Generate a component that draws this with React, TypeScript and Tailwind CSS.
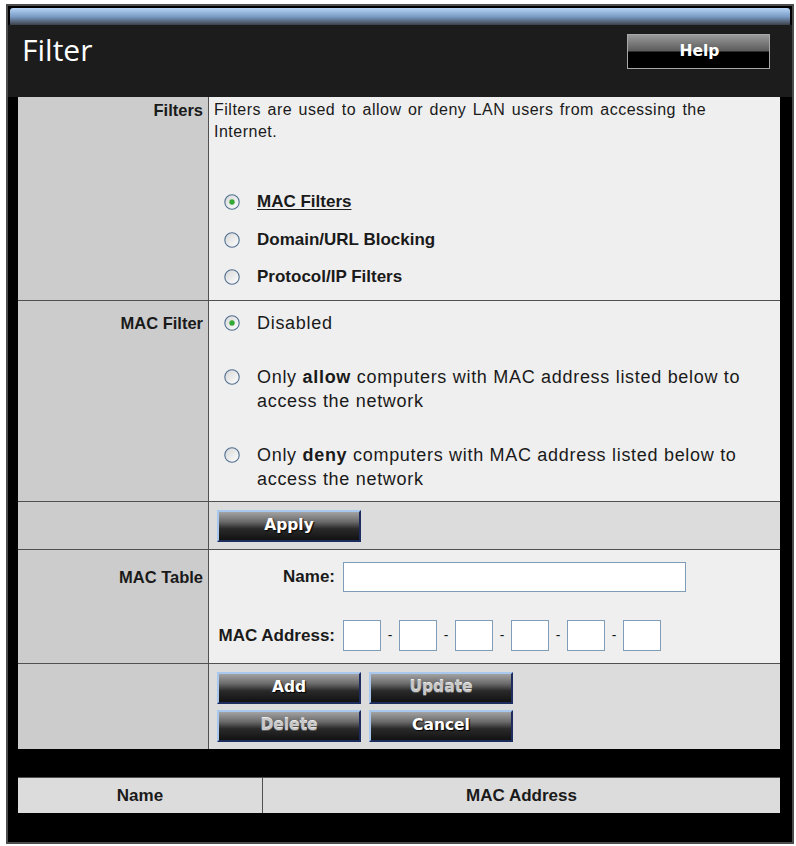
import React from "react"

const btnBase =
  "h-[32px] w-[144px] border-2 border-t-[#a9c8ee] border-l-[#a9c8ee] border-r-[#1d2c5e] border-b-[#1d2c5e] bg-[linear-gradient(to_bottom,#a3a3a3,#6a6a6a_35%,#2a2a2a_60%,#121212)] text-[15.5px] font-bold leading-none [font-family:'DejaVu_Sans',Verdana,sans-serif]"

function ActionButton({ label, disabled = false }: { label: string; disabled?: boolean }) {
  return (
    <button
      className={
        btnBase +
        (disabled
          ? " text-[#c9c9c9] [text-shadow:0_1px_0_#5a5a5a,0_-1px_0_#eeeeee]"
          : " text-white [text-shadow:1px_1px_1px_#000]")
      }
    >
      {label}
    </button>
  )
}

function Radio({ checked = false }: { checked?: boolean }) {
  return (
    <svg width="16" height="16" viewBox="0 0 16 16" className="shrink-0">
      <defs>
        <linearGradient id={checked ? "rg-on" : "rg-off"} x1="0" y1="0" x2="1" y2="1">
          <stop offset="0" stopColor="#d6d6d6" />
          <stop offset="1" stopColor="#ffffff" />
        </linearGradient>
      </defs>
      <circle cx="8" cy="8" r="7.2" fill={`url(#${checked ? "rg-on" : "rg-off"})`} stroke="#4f6f90" strokeWidth="1.1" />
      {checked && <circle cx="8" cy="8" r="2.7" fill="#35a835" />}
    </svg>
  )
}

function MacBox() {
  return <input className="h-[31px] w-[38px] border border-[#7f9db9] bg-white outline-none" />
}

export default function App() {
  return (
    <div className="min-h-screen bg-white pl-[6px] pt-[4px] text-[#1a1a1a] [font-family:'Liberation_Sans',Arial,sans-serif]">
      <div className="flex h-[840px] w-[788px] flex-col border-2 border-[#4d4d4d] bg-black">
        {/* top glossy bar */}
        <div className="mx-[2px] mt-[2px] h-[17px] rounded-t-[3px] bg-[linear-gradient(to_bottom,#b7d4f5,#7b9cc6_50%,#3d4148)]" />

        {/* title bar */}
        <div className="flex h-[72px] items-start justify-between bg-[#1c1c1c] pl-[14px] pr-[22px]">
          <h1 className="mt-[5px] text-[30px] leading-[40px] text-white [font-family:'Open_Sans',sans-serif]">Filter</h1>
          <button className="mt-[9px] h-[35px] w-[143px] border border-[#a8a8a8] bg-[linear-gradient(to_bottom,#9a9a9a,#5c5c5c_48%,#000_52%,#000)] pl-[2px] text-[15.5px] font-bold text-white [font-family:'DejaVu_Sans',Verdana,sans-serif]">
            Help
          </button>
        </div>

        <div className="pl-[10px] pr-[12px]">
          {/* Filters */}
          <div className="flex h-[204px] border-b border-[#505050]">
            <div className="w-[191px] border-r border-[#505050] bg-[#cccccc] pr-[5px] pt-[2px] text-right text-[16.5px] font-bold leading-[22px]">
              Filters
            </div>
            <div className="flex-1 bg-[#efefef] pl-[5px] pt-[2px]">
              <p className="w-[530px] text-[16px] leading-[22px] tracking-[0.5px] [word-spacing:1.5px]">
                Filters are used to allow or deny LAN users from accessing the Internet.
              </p>
              <div className="mt-[47px] flex flex-col gap-[13.5px] pl-[10px] text-[17px] font-bold">
                <label className="flex h-[24px] items-center gap-[17px]">
                  <Radio checked />
                  <span className="underline underline-offset-2">MAC Filters</span>
                </label>
                <label className="flex h-[24px] items-center gap-[17px]">
                  <Radio />
                  <span>Domain/URL Blocking</span>
                </label>
                <label className="flex h-[24px] items-center gap-[17px]">
                  <Radio />
                  <span>Protocol/IP Filters</span>
                </label>
              </div>
            </div>
          </div>

          {/* MAC Filter */}
          <div className="flex h-[201px] border-b border-[#505050]">
            <div className="w-[191px] border-r border-[#505050] bg-[#cccccc] pr-[5px] pt-[10px] text-right text-[16.5px] font-bold leading-[24px]">
              MAC Filter
            </div>
            <div className="flex flex-1 flex-col gap-[30px] bg-[#efefef] pl-[15px] pr-[20px] pt-[10px] text-[18px] leading-[24px] tracking-[0.7px]">
              <label className="flex items-start gap-[17px]">
                <span className="mt-[4px]">
                  <Radio checked />
                </span>
                <span>Disabled</span>
              </label>
              <label className="flex items-start gap-[17px]">
                <span className="mt-[4px]">
                  <Radio />
                </span>
                <span>
                  Only <b>allow</b> computers with MAC address listed below to
                  <br />
                  access the network
                </span>
              </label>
              <label className="flex items-start gap-[17px]">
                <span className="mt-[4px]">
                  <Radio />
                </span>
                <span>
                  Only <b>deny</b> computers with MAC address listed below to
                  <br />
                  access the network
                </span>
              </label>
            </div>
          </div>

          {/* Apply */}
          <div className="flex h-[48px] border-b border-[#505050]">
            <div className="w-[191px] border-r border-[#505050] bg-[#cccccc]" />
            <div className="flex-1 bg-[#dcdcdc] pl-[8px] pt-[8px]">
              <ActionButton label="Apply" />
            </div>
          </div>

          {/* MAC Table */}
          <div className="flex h-[114px] border-b border-[#505050]">
            <div className="w-[191px] border-r border-[#505050] bg-[#cccccc] pr-[5px] pt-[15px] text-right text-[16.5px] font-bold leading-[24px]">
              MAC Table
            </div>
            <div className="flex flex-1 flex-col gap-[28px] bg-[#efefef] pt-[12px] text-[17px] font-bold">
              <div className="flex items-center gap-[8px]">
                <span className="w-[126px] text-right">Name:</span>
                <input className="h-[30px] w-[343px] border border-[#7f9db9] bg-white outline-none" />
              </div>
              <div className="flex items-center gap-[8px]">
                <span className="w-[126px] text-right">MAC Address:</span>
                <div className="flex items-center">
                  {[0, 1, 2, 3, 4, 5].map((i) => (
                    <React.Fragment key={i}>
                      {i > 0 && <span className="w-[18px] text-center text-[14px] font-normal">-</span>}
                      <MacBox />
                    </React.Fragment>
                  ))}
                </div>
              </div>
            </div>
          </div>

          {/* Add / Update / Delete / Cancel */}
          <div className="flex h-[85px]">
            <div className="w-[191px] border-r border-[#505050] bg-[#cccccc]" />
            <div className="grid flex-1 grid-cols-[144px_144px] content-start gap-x-[8px] gap-y-[6px] bg-[#dcdcdc] pl-[8px] pt-[8px]">
              <ActionButton label="Add" />
              <ActionButton label="Update" disabled />
              <ActionButton label="Delete" disabled />
              <ActionButton label="Cancel" />
            </div>
          </div>

          {/* list header */}
          <div className="mt-[28px] flex h-[36px] border-t border-[#505050] bg-[#dcdcdc] text-[17px] font-bold">
            <div className="flex w-[245px] items-center justify-center border-r border-[#505050]">Name</div>
            <div className="flex flex-1 items-center justify-center">MAC Address</div>
          </div>
        </div>
      </div>
    </div>
  )
}
